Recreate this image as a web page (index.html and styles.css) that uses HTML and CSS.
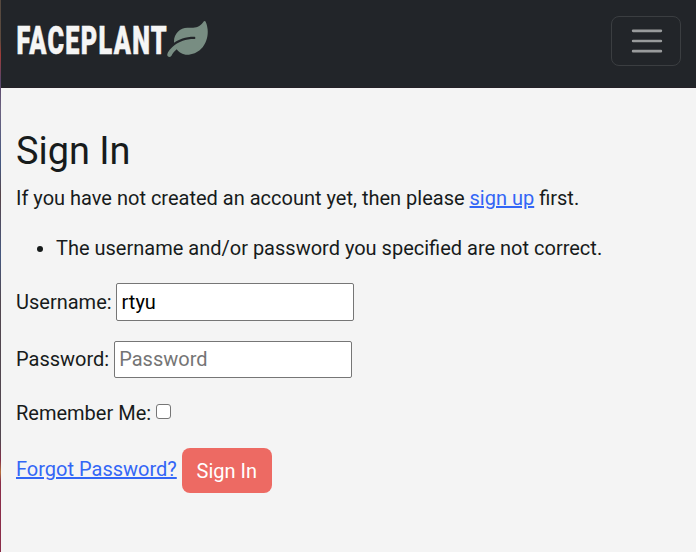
FILE: index.html
```html
<!DOCTYPE html>
<html lang="en">
<head>
<meta charset="utf-8">
<title>Faceplant</title>
<link rel="stylesheet" href="styles.css">
</head>
<body>
<div class="edge"></div>
<div class="page">
  <header class="navbar">
    <div class="brand">
      <svg class="wordmark" width="151" height="40" viewBox="0 0 151 40"><text x="0.5" y="33" textLength="151.5" lengthAdjust="spacingAndGlyphs">FACEPLANT</text></svg>
      <svg class="leaf" viewBox="0 0 576 512"><path d="M546.2 9.7c-5.6-12.5-21.6-13-28.3-1.2C486.9 62.4 431.4 96 368 96h-80C182 96 96 182 96 288c0 7 .8 13.7 1.5 20.5C161.3 262.8 253.4 224 384 224c8.8 0 16 7.2 16 16s-7.2 16-16 16C132.6 256 26 410.1 2.4 468c-6.6 16.3 1.2 34.9 17.5 41.6 16.4 6.8 35-1.1 41.8-17.3 1.5-3.6 20.9-47.9 71.9-90.6 32.4 43.9 94 85.8 174.9 77.2C465.5 467.5 576 326.7 576 154.3c0-50.2-10.8-102.2-29.8-144.6z"/></svg>
    </div>
    <button class="toggler" aria-label="Toggle navigation">
      <svg viewBox="0 0 30 30"><path d="M4 7h22M4 15h22M4 23h22"/></svg>
    </button>
  </header>
  <main>
    <h1>Sign In</h1>
    <p>If you have not created an account yet, then please <a href="#">sign up</a> first.</p>
    <form>
      <ul><li>The username and/or password you specified are not correct.</li></ul>
      <div class="field user"><label for="u">Username:</label><input class="text" id="u" type="text" value="rtyu"></div>
      <div class="field pass"><label for="p">Password:</label><input class="text" id="p" type="password" placeholder="Password"></div>
      <div class="field remember"><label for="r">Remember Me:</label><input class="check" id="r" type="checkbox"></div>
      <div class="actions"><a href="#">Forgot Password?</a><button class="submit" type="button">Sign In</button></div>
    </form>
  </main>
</div>
</body>
</html>
```

FILE: styles.css
```css
* { box-sizing: border-box; }
body {
  margin: 0;
  height: 552px;
  display: flex;
  overflow: hidden;
  background: #f4f4f4;
  color: #171b1b;
  font: 20px/30px Roboto, sans-serif;
}
.edge {
  width: 1px;
  background: linear-gradient(#55493f 0, #5c4a3e 40px, #a03c38 55px, #59456a 80px, #6b6280 110px, #44577f 165px, #574348 195px, #44577f 255px, #51464f 300px, #51464f 440px, #832c47 460px, #b5703c 472px, #8a2c48 482px, #8a2c48 552px);
}
.page { flex: 1; }
.navbar {
  height: 88px;
  padding: 0 15px 6px;
  display: flex;
  align-items: center;
  justify-content: space-between;
  background: #222529;
  border-bottom: 1px solid #252127;
}
.brand { display: flex; align-items: center; }
.wordmark { display: block; overflow: visible; }
.wordmark text {
  font: 900 38.5px Roboto, sans-serif;
  letter-spacing: 2px;
  fill: #f5f5f5;
  stroke: #f5f5f5;
  stroke-width: .6px;
}
.leaf { width: 41px; height: 36px; fill: #788d82; margin-top: -3px; }
.toggler {
  width: 70px;
  height: 50px;
  padding: 0;
  display: flex;
  align-items: center;
  justify-content: center;
  background: none;
  border: 1px solid #3b3e41;
  border-radius: 8px;
}
.toggler svg {
  width: 38px;
  height: 38px;
  margin: 1px 0 0 1px;
  fill: none;
  stroke: #999b9c;
  stroke-width: 2;
  stroke-linecap: round;
}
main { padding: 41px 15px 0; }
h1 { margin: 0 0 9px; font-size: 37.9px; line-height: 45px; font-weight: 400; }
p { margin: 0 0 20px; }
a { color: #3366f6; text-decoration: underline; }
ul { margin: 0 0 20px; padding-left: 40px; }
.field { display: flex; align-items: center; }
.user { height: 38px; gap: 4px; margin-bottom: 20px; }
.pass { height: 37px; gap: 5px; margin-bottom: 20px; }
.pass label { margin-top: -1px; }
.text {
  width: 238px;
  height: 100%;
  padding: 1px 4px;
  border: 1px solid #767676;
  border-radius: 2px;
  background: #fff;
  color: #000;
  font: inherit;
}
.user .text { padding-left: 5px; }
.pass .text { padding-bottom: 3px; }
.text::placeholder { color: #757575; }
.remember { height: 30px; gap: 5px; margin-bottom: 20px; }
.check {
  appearance: none;
  width: 15px;
  height: 15px;
  margin: -3px 0 0;
  border: 1px solid #767676;
  border-radius: 3px;
  background: #fff;
}
.actions { display: flex; gap: 5px; }
.actions a { margin-top: 6px; }
.submit {
  width: 90px;
  height: 45px;
  padding: 0;
  border: 0;
  border-radius: 8px;
  background: #ed6a63;
  color: #fff;
  font: 400 20px/30px Roboto, sans-serif;
}
```
